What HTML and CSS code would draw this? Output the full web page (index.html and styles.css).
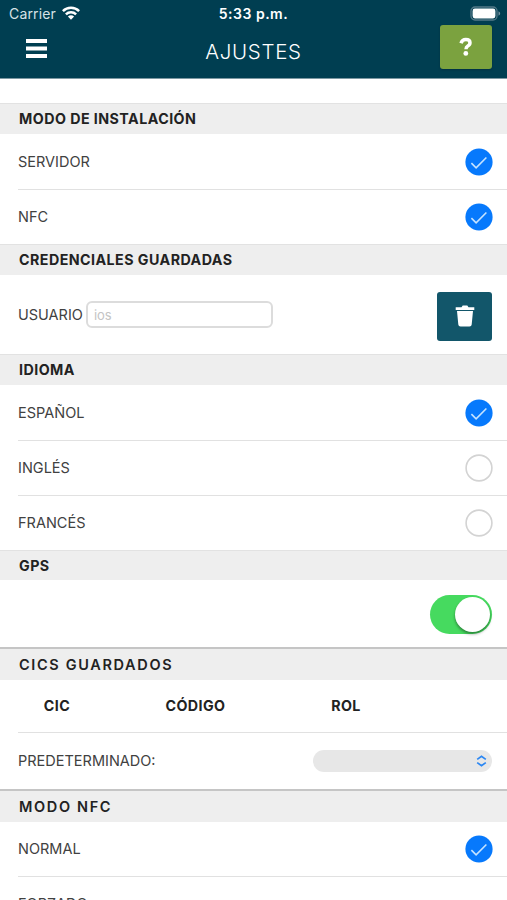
FILE: index.html
```html
<!DOCTYPE html>
<html lang="es">
<head>
<meta charset="utf-8">
<title>Ajustes</title>
<link rel="stylesheet" href="styles.css">
</head>
<body>
<svg class="defs" width="0" height="0">
  <symbol id="check" viewBox="0 0 28 28"><circle cx="14" cy="14" r="13.6" fill="#0779fc"/><path d="M6.4 15.1 11.1 19.8 21.4 9.5" fill="none" stroke="#c5e3ff" stroke-width="1.6"/></symbol>
  <symbol id="empty" viewBox="0 0 28 28"><circle cx="14" cy="14" r="12.9" fill="#fff" stroke="#d3d3d3" stroke-width="1.6"/></symbol>
</svg>
<header class="header">
  <div class="status">
    <div class="status-left"><span class="carrier">Carrier</span>
      <svg class="wifi" viewBox="0 0 18 14" width="18" height="14"><g fill="none" stroke="#fff" stroke-width="2.5"><path d="M.9 5.2a11.5 11.5 0 0 1 16.2 0"/><path d="M3.9 8.4a7.3 7.3 0 0 1 10.2 0"/></g><path d="M5.9 10.6a4.5 4.5 0 0 1 6.2 0L9 13.8z" fill="#fff"/></svg>
    </div>
    <span class="time">5:33 p.m.</span>
    <svg class="battery" viewBox="0 0 31 15" width="31" height="15"><rect x="1" y="1" width="26" height="13" rx="4" fill="none" stroke="#537988" stroke-width="1.3"/><rect x="2.6" y="2.6" width="22.8" height="9.8" rx="2.3" fill="#fff"/><path d="M28.5 5.3v4.4q1.7-.8 1.7-2.2t-1.7-2.2z" fill="#7793a1"/></svg>
  </div>
  <div class="toolbar">
    <svg class="menu" viewBox="0 0 21 19" width="21" height="19"><path d="M0 2h21M0 9.5h21M0 17h21" stroke="#fff" stroke-width="3.8"/></svg>
    <h1 class="title">AJUSTES</h1>
    <button class="help" aria-label="Ayuda"><svg viewBox="0 0 14 20" width="14" height="20"><path d="M2 6.2Q3.2 2.6 6.8 2.6q4.2 0 4.2 3.2 0 2-2.2 3.2Q7 10 7 12.3" fill="none" stroke="#fff" stroke-width="3.5"/><circle cx="6.8" cy="16.4" r="2.4" fill="#fff"/></svg></button>
  </div>
</header>
<main>
  <h2 class="band">MODO DE INSTALACIÓN</h2>
  <div class="row"><span>SERVIDOR</span><svg class="radio"><use href="#check"/></svg></div>
  <div class="row last"><span>NFC</span><svg class="radio"><use href="#check"/></svg></div>
  <h2 class="band">CREDENCIALES GUARDADAS</h2>
  <div class="row user"><label class="user-label">USUARIO</label><input class="field" placeholder="ios">
    <button class="trash" aria-label="Eliminar"><svg viewBox="0 0 20 22" width="20" height="22"><path d="M.7 2.3h5.8L7.7.6h4.6l1.2 1.7h5.8v2.6H.7zM2 6.1h16l-1.3 13.3q-.2 2-2.2 2h-9q-2 0-2.2-2z" fill="#fff"/></svg></button></div>
  <h2 class="band">IDIOMA</h2>
  <div class="row"><span>ESPAÑOL</span><svg class="radio"><use href="#check"/></svg></div>
  <div class="row mid"><span>INGLÉS</span><svg class="radio"><use href="#empty"/></svg></div>
  <div class="row last"><span>FRANCÉS</span><svg class="radio"><use href="#empty"/></svg></div>
  <h2 class="band short">GPS</h2>
  <div class="row gps"><span class="switch"><span class="knob"></span></span></div>
  <h2 class="band heavy">CICS GUARDADOS</h2>
  <div class="row columns"><b>CIC</b><b>CÓDIGO</b><b>ROL</b></div>
  <div class="row default"><span>PREDETERMINADO:</span>
    <span class="select"><svg viewBox="0 0 11 12" width="11" height="12"><path d="M1.2 4.4 5.5 1.2l4.3 3.2M1.2 7.6l4.3 3.2 4.3-3.2" fill="none" stroke="#2b87f3" stroke-width="1.7"/></svg></span></div>
  <h2 class="band heavy">MODO NFC</h2>
  <div class="row mid"><span>NORMAL</span><svg class="radio"><use href="#check"/></svg></div>
  <div class="row next"><span>FORZADO</span></div>
</main>
</body>
</html>
```
FILE: styles.css
```css
* { box-sizing: border-box; }
html, body { height: 900px; overflow: hidden; }
body { margin: 0; background: #fff; color: #414141; font: 14.5px/20px Inter, "Liberation Sans", sans-serif; }
.defs { position: absolute; }
button { border: 0; padding: 0; display: flex; align-items: center; justify-content: center; }
.header { height: 79px; background: #003e51; border-bottom: 1px solid #7c98a2; color: #fff; }
.status { height: 26px; display: grid; grid-template-columns: 1fr auto 1fr; align-items: center; padding: 1px 6px 0; }
.status-left { display: flex; align-items: center; gap: 6px; padding-left: 3px; }
.carrier { font-size: 14px; color: #d7e2e6; letter-spacing: .15px; }
.wifi { margin-top: -2px; }
.time { font-size: 14px; font-weight: 600; letter-spacing: .5px; }
.battery { justify-self: end; }
.toolbar { height: 52px; display: grid; grid-template-columns: 1fr auto 1fr; align-items: start; padding: 0 15px; }
.menu { margin: 13px 0 0 11px; }
.title { margin: 14px 0 0; font-size: 20.5px; line-height: 24px; font-weight: 350; letter-spacing: .7px; }
.help { justify-self: end; width: 52px; height: 44px; margin-top: -1px; background: #7ba23f; border-radius: 3px; box-shadow: 0 1px 2px #00263588; }
main { padding-top: 24px; }
.band { height: 31px; margin: 0; padding: 0 19px; background: #eee; border-top: 1px solid #e2e2e2; color: #222; font-size: 14.25px; line-height: 30px; font-weight: 650; letter-spacing: .45px; }
.short { height: 30px; }
.row { height: 56px; margin-left: 18px; padding-right: 14px; display: flex; align-items: center; justify-content: space-between; border-bottom: 1px solid #e1e1e1; }
.mid { height: 55px; }
.last { height: 54px; border-bottom: 0; }
.radio { width: 28px; height: 28px; }
.user { height: 79px; border: 0; padding-right: 15px; }
.field { width: 187px; height: 27px; margin-left: 3px; padding: 0 6px; border: 2px solid #dcdcdc; border-radius: 6px; font: 13px Inter, sans-serif; background: #fff; }
.field::placeholder { color: #c4c4c4; }
.trash { width: 55px; height: 49px; margin-left: auto; margin-top: 3px; background: #12566a; border-radius: 3px; }
.gps { height: 67px; border: 0; justify-content: flex-end; padding: 1px 15px 0 0; }
.switch { width: 62px; height: 39px; padding: 2px; border-radius: 20px; background: #46da5f; display: flex; justify-content: flex-end; }
.knob { width: 35px; height: 35px; border-radius: 50%; background: #fff; box-shadow: 0 2px 3px #0006; }
.heavy { height: 33px; border-top: 2px solid #c5c5c5; line-height: 32px; font-size: 14.5px; font-weight: 600; letter-spacing: 1.65px; }
.columns { height: 53px; display: grid; grid-template-columns: 78px 199px 102px; color: #222; text-align: center; justify-content: start; }
.columns b { font-weight: 650; font-size: 14.25px; letter-spacing: .4px; }
.select { width: 179px; height: 22px; margin-right: 1px; padding-right: 5px; border-radius: 11px; background: #e7e7e7; display: flex; align-items: center; justify-content: flex-end; }
.default { border: 0; }
.next { height: 54px; border: 0; }
```
